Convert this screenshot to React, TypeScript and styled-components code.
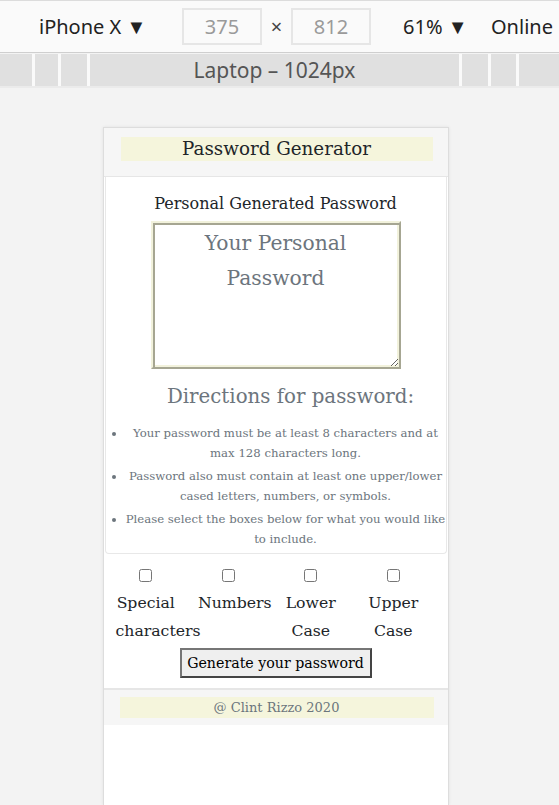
import React, { FC } from "react";
import styled, { createGlobalStyle } from "styled-components";

const GlobalStyle = createGlobalStyle`
  html, body {
    margin: 0;
    padding: 0;
    height: 100%;
    background: #f3f3f3;
    overflow: hidden;
  }
  #root {
    height: 100%;
  }
`;

const Page = styled.div`
  display: flex;
  flex-direction: column;
  height: 805px;
  font-family: "Noto Sans", "Open Sans", sans-serif;
`;

const Toolbar = styled.div`
  display: flex;
  align-items: center;
  height: 51px;
  border-top: 1px solid #dcdcdc;
  border-bottom: 1px solid #cfcfcf;
  background: #fafafa;
  padding-left: 39px;
  font-size: 20px;
  color: #222;
  white-space: nowrap;
`;

const ToolText = styled.span<{ w?: number; offset?: number }>`
  ${({ w }) => (w ? `width: ${w}px; flex: none;` : "")}
  margin-left: ${({ offset }) => offset ?? 0}px;
`;

const SizeInput = styled.div`
  width: 76px;
  height: 33px;
  border: 2px solid #e6e6e6;
  background: #fafafa;
  color: #9a9a9a;
  display: flex;
  align-items: center;
  justify-content: center;
`;

const Times = styled.span`
  width: 29px;
  text-align: center;
  color: #444;
`;

const RulerBar = styled.div`
  display: flex;
  gap: 3px;
  height: 32px;
  margin-top: 1px;
  border-bottom: 2px solid #ebebeb;
  background: #fafafa;
`;

const Segment = styled.div<{ w?: number }>`
  ${({ w }) => (w ? `width: ${w}px; flex: none;` : "flex: 1;")}
  background: #e0e0e0;
  display: flex;
  align-items: center;
  justify-content: center;
  font-size: 21px;
  color: #555;
`;

const Canvas = styled.div`
  flex: 1;
  display: flex;
  justify-content: center;
  padding-top: 39px;
  padding-right: 8px;
`;

const Device = styled.div`
  width: 344px;
  background: #fff;
  border: 1px solid #dddddd;
  border-bottom: none;
  box-shadow: 0 0 3px rgba(0, 0, 0, 0.08);
  font-family: "DejaVu Serif", "Liberation Serif", serif;
  color: #212529;
  display: flex;
  flex-direction: column;
`;

const BandHeader = styled.header`
  background: #f6f6f6;
  padding: 9px 15px 15px 17px;
  border-bottom: 1px solid #e6e6e6;
`;

const BandFooter = styled.footer`
  background: #f6f6f6;
  padding: 7px 14px 7px 16px;
  border-top: 2px solid #e6e6e6;
`;

const Strip = styled.div<{ size: number; h: number; muted?: boolean }>`
  background: #f5f5dc;
  height: ${({ h }) => h}px;
  line-height: ${({ h }) => h}px;
  text-align: center;
  font-size: ${({ size }) => size}px;
  color: ${({ muted }) => (muted ? "#6c757d" : "#212529")};
`;

const Card = styled.section`
  margin: 0 1px 0 1px;
  border: 1px solid #e8e8e8;
  border-top: none;
  border-radius: 0 0 4px 4px;
  padding: 16px 0 0;
  text-align: center;
`;

const SubTitle = styled.div`
  font-size: 16px;
  line-height: 22px;
  margin-bottom: 6px;
`;

const PasswordBox = styled.textarea`
  width: 250px;
  height: 148px;
  box-sizing: border-box;
  border: 2px solid;
  border-color: #f2f2dc #a6a692 #a6a692 #f2f2dc;
  box-shadow: inset 2px 2px 0 #a6a692, inset -2px -2px 0 #f2f2dc;
  padding: 3px 4px;
  font-family: "DejaVu Serif", serif;
  font-size: 20.3px;
  line-height: 35px;
  text-align: center;
  resize: vertical;
  display: block;
  margin: 0 auto;
  &::placeholder {
    color: #6c757d;
  }
`;

const Directions = styled.h3`
  margin: 10px 0 9px 30px;
  font-weight: 400;
  font-size: 19.8px;
  line-height: 36px;
  color: #6c757d;
`;

const Rules = styled.ul`
  margin: 0;
  padding: 0 0 0 20px;
  font-size: 11.7px;
  line-height: 19.5px;
  color: #6c757d;
  li {
    margin-bottom: 4px;
  }
`;

const Options = styled.div`
  display: grid;
  grid-template-columns: repeat(4, 82.5px);
  width: 330px;
  padding-top: 12px;
  margin-left: 1px;
`;

const Option = styled.label`
  padding: 0 11px;
  display: flex;
  flex-direction: column;
  align-items: center;
  font-size: 15.7px;
  line-height: 28px;
  text-align: center;
  input {
    width: 13px;
    height: 13px;
    margin: 3px 0 7px;
  }
`;

const OptionText = styled.span`
  width: 100%;
`;

const Actions = styled.div`
  display: flex;
  justify-content: center;
  padding: 3px 0 10px;
`;

const GenerateButton = styled.button`
  font-family: "DejaVu Serif", serif;
  font-size: 14.2px;
  width: 192px;
  height: 30px;
  padding: 0;
  color: #000;
  background: #efefef;
  border: 2px solid;
  border-color: #767676 #444 #444 #767676;
  cursor: pointer;
`;

const options = ["Special characters", "Numbers", "Lower Case", "Upper Case"];

const App: FC = () => {
  return (
    <>
      <GlobalStyle />
      <Page>
        <Toolbar>
          <ToolText w={143}>iPhone X ▼</ToolText>
          <SizeInput>375</SizeInput>
          <Times>×</Times>
          <SizeInput>812</SizeInput>
          <ToolText w={88} offset={32}>
            61% ▼
          </ToolText>
          <ToolText>Online</ToolText>
        </Toolbar>
        <RulerBar>
          <Segment w={32} />
          <Segment w={23} />
          <Segment w={26} />
          <Segment>Laptop – 1024px</Segment>
          <Segment w={26} />
          <Segment w={25} />
          <Segment w={40} />
        </RulerBar>
        <Canvas>
          <Device>
            <BandHeader>
              <Strip size={18.3} h={24}>
                Password Generator
              </Strip>
            </BandHeader>
            <Card>
              <SubTitle>Personal Generated Password</SubTitle>
              <PasswordBox placeholder="Your Personal Password" readOnly />
              <Directions>Directions for password:</Directions>
              <Rules>
                <li>
                  Your password must be at least 8 characters and at max 128
                  characters long.
                </li>
                <li>
                  Password also must contain at least one upper/lower cased
                  letters, numbers, or symbols.
                </li>
                <li>
                  Please select the boxes below for what you would like to
                  include.
                </li>
              </Rules>
            </Card>
            <Options>
              {options.map((name) => (
                <Option key={name}>
                  <input type="checkbox" />
                  <OptionText>{name}</OptionText>
                </Option>
              ))}
            </Options>
            <Actions>
              <GenerateButton>Generate your password</GenerateButton>
            </Actions>
            <BandFooter>
              <Strip size={13} h={21} muted>
                @ Clint Rizzo 2020
              </Strip>
            </BandFooter>
          </Device>
        </Canvas>
      </Page>
    </>
  );
};

export default App;
